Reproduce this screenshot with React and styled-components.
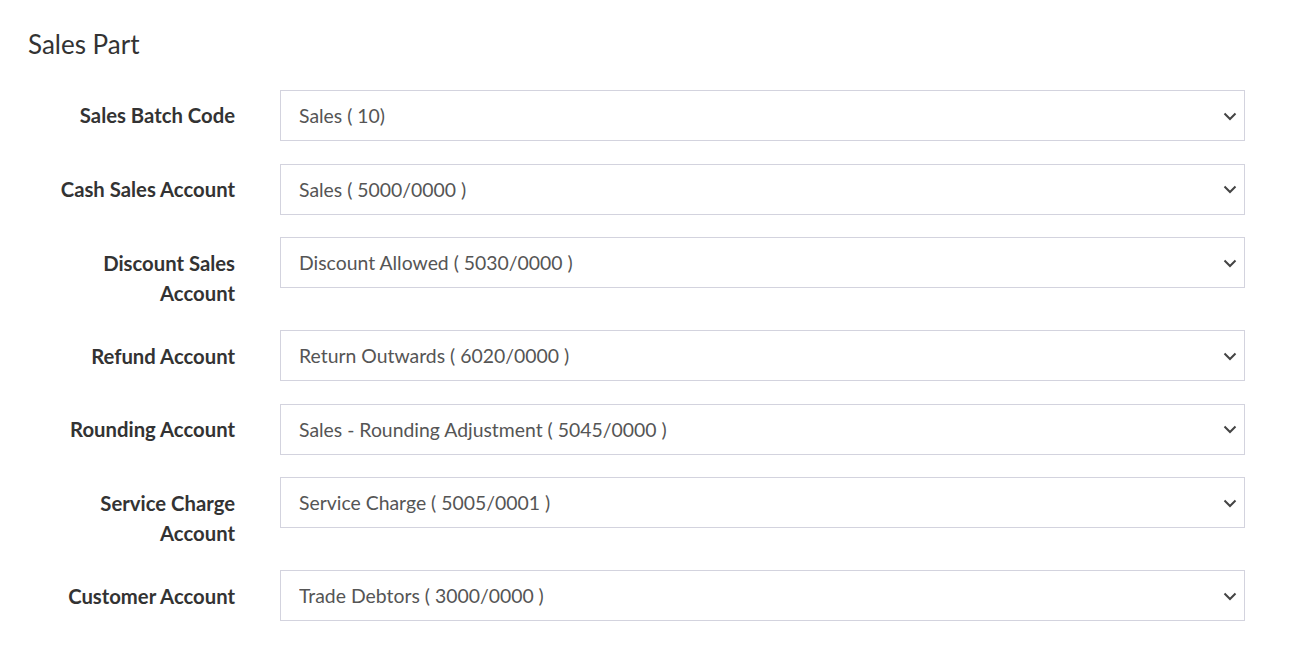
import React from "react";
import styled, { createGlobalStyle } from "styled-components";

const Global = createGlobalStyle`
  html, body { margin: 0; padding: 0; background: #fff; }
  body { font-family: Lato, "Liberation Sans", sans-serif; }
`;

const Page = styled.div`
  padding: 28px 66px 0 28px;
`;

const Title = styled.h2`
  margin: 0 0 30px 0;
  font-size: 26px;
  font-weight: 400;
  line-height: 32px;
  color: #333;
`;

const Form = styled.div`
  display: flex;
  flex-direction: column;
  gap: 22.6px;
`;

const Row = styled.div`
  display: grid;
  grid-template-columns: 207px 965px;
  column-gap: 45px;
  align-items: start;
`;

const Label = styled.label`
  justify-self: end;
  max-width: 196px;
  text-align: right;
  font-weight: 700;
  font-size: 20.3px;
  line-height: 30px;
  padding-top: 10.4px;
  color: #333;
`;

const SelectWrap = styled.div`
  position: relative;
  height: 51px;
`;

const Select = styled.select`
  appearance: none;
  -webkit-appearance: none;
  width: 100%;
  height: 51px;
  box-sizing: border-box;
  border: 1px solid #d3d3de;
  border-radius: 0;
  background: #fff;
  padding: 0 40px 0 18px;
  font-family: Lato, "Liberation Sans", sans-serif;
  font-size: 19.4px;
  color: #555;
  outline: none;
`;

const Chevron = styled.svg`
  position: absolute;
  right: 7px;
  top: 50%;
  transform: translateY(-50%);
  pointer-events: none;
`;

const rows = [
  ["Sales Batch Code", "Sales ( 10)"],
  ["Cash Sales Account", "Sales ( 5000/0000 )"],
  ["Discount Sales Account", "Discount Allowed ( 5030/0000 )"],
  ["Refund Account", "Return Outwards ( 6020/0000 )"],
  ["Rounding Account", "Sales - Rounding Adjustment ( 5045/0000 )"],
  ["Service Charge Account", "Service Charge ( 5005/0001 )"],
  ["Customer Account", "Trade Debtors ( 3000/0000 )"],
];

export default function App() {
  return (
    <Page>
      <Global />
      <Title>Sales Part</Title>
      <Form>
        {rows.map(([label, value]) => (
          <Row key={label}>
            <Label>{label}</Label>
            <SelectWrap>
              <Select defaultValue={value}>
                <option>{value}</option>
              </Select>
              <Chevron width="16" height="16" viewBox="0 0 16 16">
                <path d="M2.5 5.5 L8 11 L13.5 5.5" fill="none" stroke="#444" strokeWidth="2" />
              </Chevron>
            </SelectWrap>
          </Row>
        ))}
      </Form>
    </Page>
  );
}
